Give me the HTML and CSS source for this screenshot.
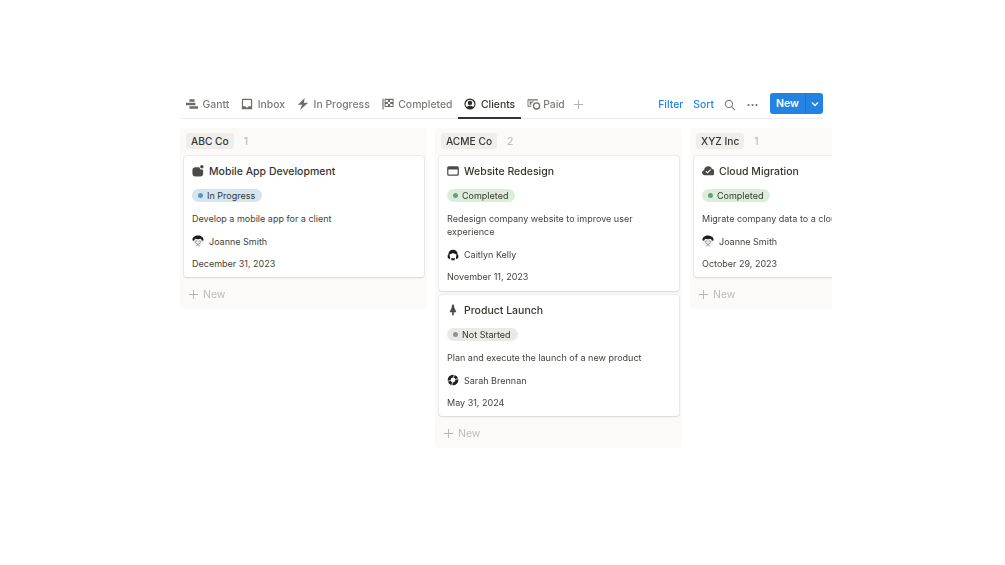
FILE: index.html
```html
<!DOCTYPE html>
<html lang="en">
<head>
<meta charset="utf-8">
<title>Clients</title>
<link rel="stylesheet" href="styles.css">
</head>
<body>
<main class="board">
  <nav class="toolbar">
    <div class="tabs">
      <a class="tab"><svg class="tab-icon" viewBox="0 0 14 14"><path d="M4 1.500h6v3H4zM0 5.500h11v3H0zM4 9.500h10v3H4z"/></svg>Gantt</a>
      <a class="tab"><svg class="tab-icon" viewBox="0 0 14 14"><path fill-rule="evenodd" d="M2.500 1h9A1.500 1.500 0 0 1 13 2.500V13H1V2.500A1.500 1.500 0 0 1 2.500 1zm0 1.300-.2 7.200h3c.2 1 .8 1.500 1.700 1.500s1.500-.5 1.700-1.500h3l-.2-7.200z"/></svg>Inbox</a>
      <a class="tab"><svg class="tab-icon" viewBox="0 0 14 14"><path d="M9 0 1 8h5L3.500 14 13 5.500H8z"/></svg>In Progress</a>
      <a class="tab"><svg class="tab-icon" viewBox="0 0 14 14"><path fill-rule="evenodd" d="M.500 1h1.300v12.500H.500zM3 1h10.500v9.500H3zm1.200 1.200v2.400h2.700V2.200zm2.700 2.400v2.500h2.600V4.600zm2.600 0h2.800V2.200H9.500zM4.200 7.100v2.200h2.700V7.100zm5.300 0v2.200h2.800V7.100z"/></svg>Completed</a>
      <a class="tab active"><svg class="tab-icon" viewBox="0 0 14 14"><path fill-rule="evenodd" d="M7 .5a6.500 6.500 0 1 1 0 13 6.500 6.500 0 0 1 0-13zm0 1.400a5.100 5.100 0 0 0-3.800 8.500C4.200 9.500 5.500 9 7 9s2.800.5 3.800 1.400A5.100 5.100 0 0 0 7 1.900zm0 1.200a2.600 2.600 0 1 1 0 5.200 2.600 2.600 0 0 1 0-5.200z"/></svg>Clients</a>
      <a class="tab paid"><svg class="tab-icon money" viewBox="0 0 16 14"><path d="M.500 1.500h12v1.300h-11V9h3.300v1.300H.500zM3 4h4.500v1.200H5v2.600H3z"/><path fill-rule="evenodd" d="M11 5a4.300 4.300 0 1 1 0 8.600A4.300 4.300 0 0 1 11 5zm0 1.500a2.800 2.800 0 1 0 0 5.600 2.800 2.800 0 0 0 0-5.600z"/></svg>Paid</a>
      <a class="tab add"><svg class="plus" viewBox="0 0 12 12"><path d="M5.500 1h1v4.500H11v1H6.500V11h-1V6.500H1v-1h4.500z"/></svg></a>
    </div>
    <div class="actions">
      <a class="action">Filter</a>
      <a class="action">Sort</a>
      <svg class="search" viewBox="0 0 14 14"><path d="M5.800 1a4.800 4.800 0 0 1 3.800 7.700l3.700 3.700-.9.900-3.700-3.700A4.800 4.800 0 1 1 5.800 1zm0 1.200a3.600 3.600 0 1 0 0 7.200 3.600 3.600 0 0 0 0-7.200z"/></svg>
      <svg class="dots" viewBox="0 0 12 4"><circle cx="1.700" cy="2" r="1.200"/><circle cx="6" cy="2" r="1.200"/><circle cx="10.300" cy="2" r="1.200"/></svg>
      <div class="new-button">
        <span class="new-label">New</span>
        <span class="new-caret"><svg viewBox="0 0 8 6"><path d="M1 1.500 4 4.500 7 1.500" fill="none" stroke="#fff" stroke-width="1.300"/></svg></span>
      </div>
    </div>
  </nav>

  <section class="columns">
    <div class="column">
      <header class="column-head"><span class="group-name">ABC Co</span><span class="count">1</span></header>
      <article class="card">
        <h3 class="card-title"><svg class="card-icon" viewBox="0 0 14 14"><path d="M11.500 0a2 2 0 1 1 0 4 2 2 0 0 1 0-4zM4 2.500h4.600a3.500 3.500 0 0 0 3.400 3h1V10a3.500 3.500 0 0 1-3.500 3.500H4A3.500 3.500 0 0 1 .500 10V6A3.500 3.500 0 0 1 4 2.500z"/></svg>Mobile App Development</h3>
        <div class="status blue"><i class="dot"></i>In Progress</div>
        <p class="desc">Develop a mobile app for a client</p>
        <div class="person"><svg class="avatar" viewBox="0 0 14 14"><circle cx="7" cy="7" r="6.800" fill="#f1f1ef"/><path d="M.500 5.800C.500 2.500 3.500.5 7 .5s6.500 2 6.500 5.300c0 .7-1 1-1.800.7l-1.500-2C8.500 5.200 5.500 5.200 3.800 4.500l-1.500 2c-.8.300-1.800 0-1.800-.7z" fill="#1b1b1b"/><path d="M3.400 6.500C3.800 9 5.500 10.800 7 10.800s3.200-1.800 3.600-4.300M5 13.300l2-2.500 2 2.500" fill="none" stroke="#777" stroke-width=".8"/><path d="M5 7h1.200M7.800 7H9" stroke="#333" stroke-width=".7"/></svg>Joanne Smith</div>
        <div class="date">December 31, 2023</div>
      </article>
      <div class="add-new"><svg class="plus" viewBox="0 0 12 12"><path d="M5.500 1h1v4.500H11v1H6.500V11h-1V6.500H1v-1h4.500z"/></svg>New</div>
    </div>

    <div class="column">
      <header class="column-head"><span class="group-name">ACME Co</span><span class="count">2</span></header>
      <article class="card">
        <h3 class="card-title"><svg class="card-icon" viewBox="0 0 14 14"><path fill-rule="evenodd" d="M2 1.500h10A1.800 1.800 0 0 1 13.800 3.300v7.400A1.800 1.800 0 0 1 12 12.500H2A1.800 1.800 0 0 1 .200 10.700V3.300A1.800 1.800 0 0 1 2 1.500zm-.4 3.700v5.400c0 .3.200.5.500.5h9.800c.3 0 .5-.2.500-.5V5.200z"/></svg>Website Redesign</h3>
        <div class="status green"><i class="dot"></i>Completed</div>
        <p class="desc">Redesign company website to improve user experience</p>
        <div class="person"><svg class="avatar" viewBox="0 0 14 14"><path d="M7 1c3.300 0 5.300 2.200 5.300 5l.9 1.200v3.300l-2.700 1.500V9c.5-.8.600-2 .2-3-1.500 0-2.700-.5-3.700-1.300-1 .8-2.200 1.300-3.700 1.300-.4 1-.3 2.200.2 3v3L.8 10.500V7.200L1.700 6C1.700 3.200 3.700 1 7 1zM5 10.300c1.200.8 2.800.8 4 0v2.900H5z" fill="#1e1e1e"/></svg>Caitlyn Kelly</div>
        <div class="date">November 11, 2023</div>
      </article>
      <article class="card">
        <h3 class="card-title"><svg class="card-icon" viewBox="0 0 14 14"><path d="M7 0c1 .8 1.600 2.500 1.600 4.500l2.400 5H8v2.700L7 14l-1-1.800V9.500H3l2.400-5C5.400 2.500 6 .8 7 0z"/></svg>Product Launch</h3>
        <div class="status gray"><i class="dot"></i>Not Started</div>
        <p class="desc">Plan and execute the launch of a new product</p>
        <div class="person"><svg class="avatar" viewBox="0 0 14 14"><path fill-rule="evenodd" d="M7 .8a6.200 6.200 0 1 1 0 12.400A6.200 6.200 0 0 1 7 .8zm0 3.400a2.800 2.800 0 1 0 0 5.600 2.800 2.800 0 0 0 0-5.600z" fill="#1e1e1e"/><path d="M.800 8.500l3.500-1M8.500.800l-1 3.500M13.200 5.500l-3.500 1M5.500 13.200l1-3.500" stroke="#fff" stroke-width="1"/></svg>Sarah Brennan</div>
        <div class="date">May 31, 2024</div>
      </article>
      <div class="add-new"><svg class="plus" viewBox="0 0 12 12"><path d="M5.500 1h1v4.500H11v1H6.500V11h-1V6.500H1v-1h4.500z"/></svg>New</div>
    </div>

    <div class="column">
      <header class="column-head"><span class="group-name">XYZ Inc</span><span class="count">1</span></header>
      <article class="card">
        <h3 class="card-title"><svg class="card-icon" viewBox="0 0 14 14"><path fill-rule="evenodd" d="M7.500 1.500a4 4 0 0 1 3.900 3.300A3.400 3.400 0 0 1 11 12H3a3.200 3.200 0 0 1-.5-6.300 5 5 0 0 1 5-4.200zM9.600 5 6.400 8.200 5 6.800l-.9.900 2.300 2.300 4.100-4.100z"/></svg>Cloud Migration</h3>
        <div class="status green"><i class="dot"></i>Completed</div>
        <p class="desc clip">Migrate company data to a cloud-based platform</p>
        <div class="person"><svg class="avatar" viewBox="0 0 14 14"><circle cx="7" cy="7" r="6.800" fill="#f1f1ef"/><path d="M.500 5.800C.500 2.500 3.500.5 7 .5s6.500 2 6.500 5.300c0 .7-1 1-1.800.7l-1.500-2C8.500 5.200 5.500 5.200 3.800 4.500l-1.500 2c-.8.300-1.800 0-1.800-.7z" fill="#1b1b1b"/><path d="M3.400 6.500C3.800 9 5.500 10.800 7 10.800s3.200-1.800 3.600-4.300M5 13.300l2-2.500 2 2.500" fill="none" stroke="#777" stroke-width=".8"/><path d="M5 7h1.200M7.800 7H9" stroke="#333" stroke-width=".7"/></svg>Joanne Smith</div>
        <div class="date">October 29, 2023</div>
      </article>
      <div class="add-new"><svg class="plus" viewBox="0 0 12 12"><path d="M5.500 1h1v4.500H11v1H6.500V11h-1V6.500H1v-1h4.500z"/></svg>New</div>
    </div>
  </section>
</main>
</body>
</html>
```

FILE: styles.css
```css
* { box-sizing: border-box; }
html, body { margin: 0; padding: 0; background: #fff; }
body { width: 1005px; height: 565px; overflow: hidden; font-family: Inter, "Noto Sans", sans-serif; color: #37352f; }
.board { width: 652px; margin: 91px 0 0 180px; overflow: hidden; filter: blur(.3px); }
.toolbar { display: flex; justify-content: space-between; align-items: center; height: 28px; margin-right: 9px; border-bottom: 1px solid #ebebea; }
.tabs { display: flex; height: 28px; }
.tab { display: flex; align-items: center; gap: 4.500px; height: 28px; padding: 0 6px 1px; font-size: 10.400px; font-weight: 500; color: #7d7b77; white-space: nowrap; }
.tab.active { color: #37352f; border-bottom: 2px solid #37352f; padding: 1px 6px 0; }
.tab.paid { gap: 2px; }
.tab.add { padding: 0 2px 1px; }
.tab-icon { width: 12px; height: 12px; fill: #6e6c68; flex: none; }
.tab.active .tab-icon { fill: #2f2e2a; }
.tab-icon.money { width: 14px; }
.plus { width: 11px; height: 11px; fill: #b4b3b0; flex: none; }
.actions { display: flex; align-items: center; }
.action { font-size: 10.400px; font-weight: 500; color: #2383e2; margin-right: 10px; }
.search { width: 12px; height: 12px; fill: #7d7b77; margin-right: 11px; }
.dots { width: 11px; height: 4px; fill: #6e6c68; margin-right: 12px; }
.new-button { display: flex; width: 53px; height: 21px; margin-bottom: 2px; background: #2383e2; border-radius: 3px; color: #fff; font-size: 10.500px; font-weight: 600; }
.new-label { display: flex; align-items: center; justify-content: center; width: 35px; }
.new-caret { display: flex; align-items: center; justify-content: center; flex: 1; border-left: 1px solid #1f74c8; }
.new-caret svg { width: 8px; height: 6px; }
.columns { display: flex; align-items: flex-start; gap: 8px; margin-top: 9px; }
.column { flex: none; width: 247px; padding: 4px 4px 0; background: #fbfaf9; border-radius: 4px; }
.column-head { display: flex; align-items: center; height: 16px; margin: 1px 0 7px; padding-left: 2px; }
.group-name { padding: 0 5px; height: 16px; line-height: 16px; background: #efeeec; border-radius: 3px; font-size: 10.200px; font-weight: 500; color: #37352f; }
.count { margin-left: 10px; font-size: 10.500px; color: #b4b3b0; }
.card { width: 240px; padding: 8px 8px 6.500px; margin-bottom: 4.500px; background: #fff; border-radius: 3px; box-shadow: 0 0 0 1px rgba(15,15,15,.05), 0 1px 2px rgba(15,15,15,.1); }
.card-title { display: flex; align-items: center; gap: 5px; height: 14px; margin: 0 0 10.500px; font-size: 10.500px; font-weight: 500; color: #37352f; white-space: nowrap; }
.card-icon { width: 12px; height: 12px; fill: #4b4a47; flex: none; }
.status { display: flex; width: fit-content; align-items: center; gap: 4px; height: 13px; padding: 0 7px 0 6px; border-radius: 7px; font-size: 9px; color: #37352f; white-space: nowrap; }
.dot { width: 5px; height: 5px; border-radius: 50%; }
.blue { background: #d3e5ef; }
.blue .dot { background: #5b97bd; }
.green { background: #dbeddb; }
.green .dot { background: #6c9b7d; }
.gray { background: #e9e9e7; }
.gray .dot { background: #91918e; }
.desc { margin: 10px 0 0; font-size: 9px; line-height: 13.500px; color: #44423d; }
.desc.clip { width: 232px; }
.person { display: flex; align-items: center; gap: 5px; height: 14px; margin-top: 9px; font-size: 9px; color: #44423d; white-space: nowrap; }
.avatar { width: 12px; height: 12px; flex: none; }
.date { height: 14px; margin-top: 8.500px; line-height: 14px; font-size: 9px; color: #44423d; }
.add-new { display: flex; align-items: center; gap: 4px; height: 27.500px; padding: 0 0 2px 4px; font-size: 10.500px; color: #bdbcb9; }
```
